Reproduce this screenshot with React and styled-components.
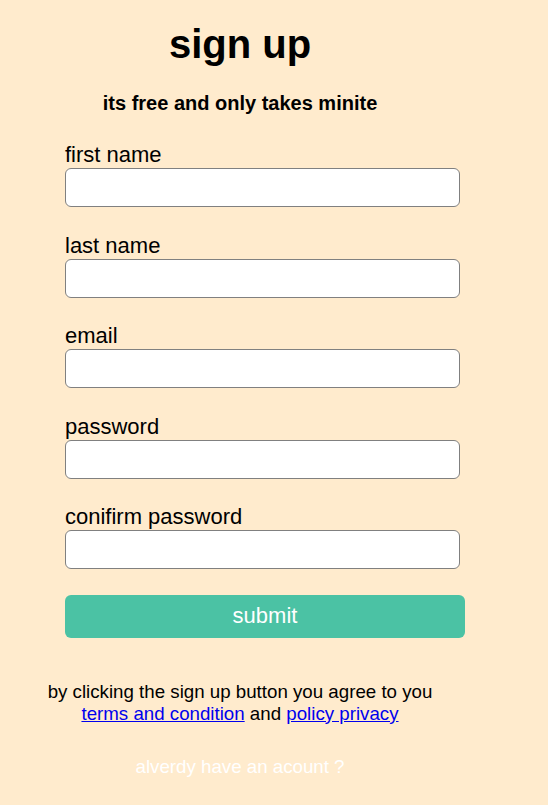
import React from "react";
import styled, { createGlobalStyle } from "styled-components";

const GlobalStyle = createGlobalStyle`
  html, body {
    margin: 0;
    padding: 0;
    background: #ffebcd;
    font-family: "Liberation Sans", Arial, sans-serif;
  }
`;

const fields = [
  { id: "first", label: "first name", type: "text" },
  { id: "last", label: "last name", type: "text" },
  { id: "email", label: "email", type: "email" },
  { id: "password", label: "password", type: "password" },
  { id: "confirm", label: "conifirm password", type: "password" },
];

export default function App() {
  return (
    <Page>
      <GlobalStyle />
      <Title>sign up</Title>
      <Subtitle>its free and only takes minite</Subtitle>
      <Form onSubmit={(e) => e.preventDefault()}>
        {fields.map((f) => (
          <Field key={f.id}>
            <Label htmlFor={f.id}>{f.label}</Label>
            <Input id={f.id} type={f.type} />
          </Field>
        ))}
        <Submit type="submit">submit</Submit>
      </Form>
      <Terms>
        by clicking the sign up button you agree to you{" "}
        <a href="#">terms and condition</a> and <a href="#">policy privacy</a>
      </Terms>
      <Login>alverdy have an acount ?</Login>
    </Page>
  );
}

const Page = styled.div`
  width: 480px;
  padding-top: 21px;
  padding-bottom: 20px;
  display: flex;
  flex-direction: column;
  align-items: center;
`;

const Title = styled.h1`
  margin: 0;
  font-size: 40px;
  font-weight: bold;
  line-height: 46px;
`;

const Subtitle = styled.h3`
  margin: 25px 0 0;
  font-size: 20px;
  font-weight: bold;
  line-height: 23px;
`;

const Form = styled.form`
  align-self: stretch;
  padding-left: 65px;
  margin-top: 27px;
  display: flex;
  flex-direction: column;
  gap: 25.5px;
`;

const Field = styled.div`
  display: flex;
  flex-direction: column;
  gap: 1px;
`;

const Label = styled.label`
  font-size: 22px;
  line-height: 25px;
  color: #000;
`;

const Input = styled.input`
  box-sizing: border-box;
  width: 395px;
  height: 39px;
  background: #fff;
  border: 1px solid #808080;
  border-radius: 6px;
  padding: 0 8px;
  font-size: 16px;
  outline: none;
`;

const Submit = styled.button`
  width: 400px;
  height: 43px;
  border: none;
  border-radius: 6px;
  background: #4bc2a4;
  color: #fff;
  font-family: "Liberation Sans", Arial, sans-serif;
  font-size: 22px;
  cursor: pointer;
`;

const Terms = styled.p`
  margin: 43px 0 0;
  max-width: 420px;
  text-align: center;
  font-size: 18.72px;
  line-height: 22px;
  color: #000;

  a {
    color: #0000ee;
    text-decoration: underline;
  }
`;

const Login = styled.p`
  margin: 31px 0 0;
  font-size: 18.72px;
  line-height: 22px;
  color: #fff;
`;
